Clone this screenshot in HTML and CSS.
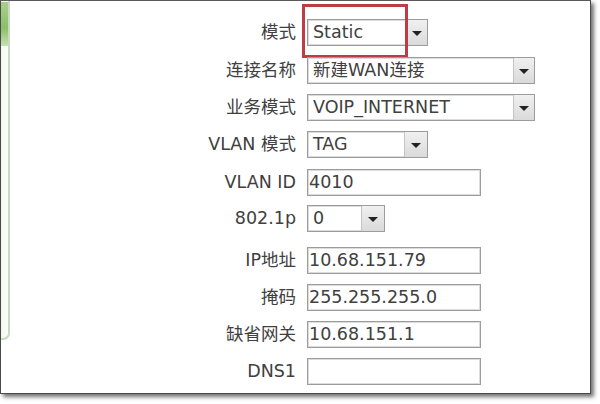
FILE: index.html
```html
<!DOCTYPE html>
<html>
<head>
<meta charset="utf-8">
<link rel="stylesheet" href="styles.css">
</head>
<body>
<div class="frame">
  <div class="side"><div class="side-top"></div></div>
  <div class="form">
    <div class="label">模式</div>
    <div class="cell">
      <div class="sel w121"><span class="val">Static</span><span class="arrow"></span></div>
      <div class="highlight"></div>
    </div>

    <div class="label">连接名称</div>
    <div class="cell"><div class="sel w228"><span class="val">新建WAN连接</span><span class="arrow"></span></div></div>

    <div class="label">业务模式</div>
    <div class="cell"><div class="sel w228"><span class="val">VOIP_INTERNET</span><span class="arrow"></span></div></div>

    <div class="label">VLAN 模式</div>
    <div class="cell"><div class="sel w121"><span class="val">TAG</span><span class="arrow wide"></span></div></div>

    <div class="label">VLAN ID</div>
    <div class="cell"><div class="inp">4010</div></div>

    <div class="label">802.1p</div>
    <div class="cell"><div class="sel w78"><span class="val">0</span><span class="arrow wide"></span></div></div>

    <div class="label">IP地址</div>
    <div class="cell"><div class="inp">10.68.151.79</div></div>

    <div class="label">掩码</div>
    <div class="cell"><div class="inp">255.255.255.0</div></div>

    <div class="label">缺省网关</div>
    <div class="cell"><div class="inp">10.68.151.1</div></div>

    <div class="label">DNS1</div>
    <div class="cell"><div class="inp"></div></div>
  </div>
</div>
</body>
</html>
```
FILE: styles.css
```css
html, body {
  margin: 0;
  padding: 0;
  background: #ffffff;
}
body {
  width: 600px;
  height: 404px;
  overflow: hidden;
  font-family: "DejaVu Sans", "Noto Sans CJK SC", sans-serif;
  color: #404040;
}
.frame {
  width: 589px;
  height: 392px;
  border: 1px solid #4a4a4a;
  border-top-color: #5a5a5a;
  background: #fff;
  box-shadow: 3px 3px 4px rgba(0,0,0,0.55);
  display: flex;
  align-items: flex-start;
}
.side {
  width: 7px;
  height: 337px;
  border-right: 2px solid #cbd9c3;
  border-bottom: 2px solid #cbd9c3;
  border-bottom-right-radius: 7px;
  background: linear-gradient(to right, #f3f8ef, #ffffff);
}
.side-top {
  height: 44px;
  margin-top: 1px;
  background: linear-gradient(to bottom, #a9cf8c, #8cbf69 60%, #c9e0b6);
}
.form {
  display: grid;
  grid-template-columns: 286px auto;
  column-gap: 11px;
  grid-template-rows: 38px 37px 37px 38px 36px 42px 37px 37px 37px 37px;
  padding-top: 18px;
  align-items: start;
  font-size: 17.5px;
}
.label {
  text-align: right;
  line-height: 27px;
  height: 27px;
  white-space: nowrap;
}
.cell {
  position: relative;
  height: 27px;
}
.sel, .inp {
  box-sizing: border-box;
  height: 27px;
  border: 1px solid #9c9c9c;
  box-shadow: inset 0 0 0 1px #dcdcdc;
  background: #fff;
  display: flex;
  align-items: center;
  white-space: nowrap;
}
.sel .val {
  flex: 1;
  padding-left: 5px;
  line-height: 25px;
}
.w121 { width: 121px; }
.w228 { width: 228px; }
.w78 { width: 78px; }
.arrow {
  width: 20px;
  height: 25px;
  border-left: 1px solid #c4c4c4;
  background: linear-gradient(to bottom, #f0f0f0, #dadada);
  display: flex;
  align-items: center;
  justify-content: center;
}
.arrow.wide { width: 22px; }
.arrow::after {
  content: "";
  width: 0;
  height: 0;
  border-left: 5px solid transparent;
  border-right: 5px solid transparent;
  border-top: 5px solid #222;
  margin-top: 1px;
}
.inp {
  width: 174px;
  padding-left: 1px;
  line-height: 25px;
}
.highlight {
  position: absolute;
  left: -5px;
  top: -15px;
  width: 100px;
  height: 48px;
  border: 3px solid #bd3c45;
  pointer-events: none;
}
```
